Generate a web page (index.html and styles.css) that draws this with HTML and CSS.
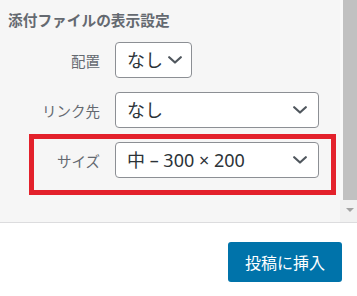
FILE: index.html
```html
<!DOCTYPE html>
<html lang="ja">
<head>
<meta charset="utf-8">
<title>添付ファイルの表示設定</title>
<link rel="stylesheet" href="styles.css">
</head>
<body>
<div class="panel">
  <div class="settings">
    <h2 class="title">添付ファイルの表示設定</h2>
    <div class="row">
      <span class="label">配置</span>
      <div class="select select-small"><span class="value">なし</span><svg class="chev" width="14" height="8" viewBox="0 0 14 8"><polyline points="1.2,1.2 7,6.5 12.8,1.2" fill="none" stroke="#50575e" stroke-width="2.2" stroke-linecap="round" stroke-linejoin="round"/></svg></div>
    </div>
    <div class="row">
      <span class="label">リンク先</span>
      <div class="select select-wide"><span class="value">なし</span><svg class="chev" width="14" height="8" viewBox="0 0 14 8"><polyline points="1.2,1.2 7,6.5 12.8,1.2" fill="none" stroke="#50575e" stroke-width="2.2" stroke-linecap="round" stroke-linejoin="round"/></svg></div>
    </div>
    <div class="row row-marked">
      <span class="label">サイズ</span>
      <div class="select select-wide"><span class="value">中 – 300 × 200</span><svg class="chev" width="14" height="8" viewBox="0 0 14 8"><polyline points="1.2,1.2 7,6.5 12.8,1.2" fill="none" stroke="#50575e" stroke-width="2.2" stroke-linecap="round" stroke-linejoin="round"/></svg></div>
      <span class="marker"></span>
    </div>
  </div>
  <div class="scrollbar">
    <div class="thumb"></div>
    <div class="track-end"><span class="arrow"></span></div>
  </div>
</div>
<div class="footer">
  <button class="insert">投稿に挿入</button>
</div>
</body>
</html>
```

FILE: styles.css
```css
html, body {
  margin: 0;
  padding: 0;
  background: #ffffff;
}

body {
  width: 357px;
  height: 296px;
  overflow: hidden;
  font-family: "Noto Sans", "Noto Sans CJK JP", sans-serif;
}

.panel {
  display: flex;
  height: 222px;
  background: #f6f6f6;
  border-bottom: 1px solid #dcdcde;
}

.settings {
  width: 340px;
  padding-left: 8px;
  box-sizing: border-box;
}

.title {
  margin: 0;
  padding-top: 10px;
  height: 42px;
  box-sizing: border-box;
  font-family: "Noto Sans CJK JP", sans-serif;
  font-size: 14.7px;
  line-height: 20px;
  font-weight: 700;
  color: #646970;
}

.row {
  display: flex;
  align-items: center;
  height: 36px;
  margin: 0 0 14px 0;
}

.row-marked {
  position: relative;
}

.label {
  width: 92px;
  margin-right: 15px;
  text-align: right;
  font-family: "Noto Sans CJK JP", sans-serif;
  font-size: 14.5px;
  color: #646970;
}

.select {
  display: flex;
  align-items: center;
  justify-content: space-between;
  height: 36px;
  box-sizing: border-box;
  padding: 0 11px 0 11px;
  background: #ffffff;
  border: 1px solid #8c8f94;
  border-radius: 4px;
  color: #2c3338;
  font-size: 18px;
}

.select-small {
  width: 77px;
  padding-right: 9px;
}

.select-wide {
  width: 204px;
}

.value {
  line-height: 34px;
  white-space: nowrap;
}

.chev {
  display: block;
  flex: none;
}

.marker {
  position: absolute;
  left: 21px;
  top: -8px;
  width: 307px;
  height: 61px;
  box-sizing: border-box;
  border: 5px solid #e3212b;
  pointer-events: none;
}

.scrollbar {
  width: 17px;
  display: flex;
  flex-direction: column;
  background: #f9f9f9;
}

.thumb {
  height: 200px;
  margin-left: 3px;
  background: #c1c1c1;
}

.track-end {
  flex: 1;
  background: #f1f1f1;
  display: flex;
  justify-content: center;
  padding-top: 8px;
  box-sizing: border-box;
}

.arrow {
  width: 0;
  height: 0;
  margin-left: 2px;
  border-left: 4px solid transparent;
  border-right: 4px solid transparent;
  border-top: 4px solid #a3a3a3;
}

.footer {
  display: flex;
  justify-content: flex-end;
  padding: 19px 15px 0 0;
}

.insert {
  width: 114px;
  height: 40px;
  border: none;
  border-radius: 3px;
  background: #0073aa;
  color: #ffffff;
  font-family: "Noto Sans CJK JP", sans-serif;
  font-size: 16px;
  padding: 0;
}
```
